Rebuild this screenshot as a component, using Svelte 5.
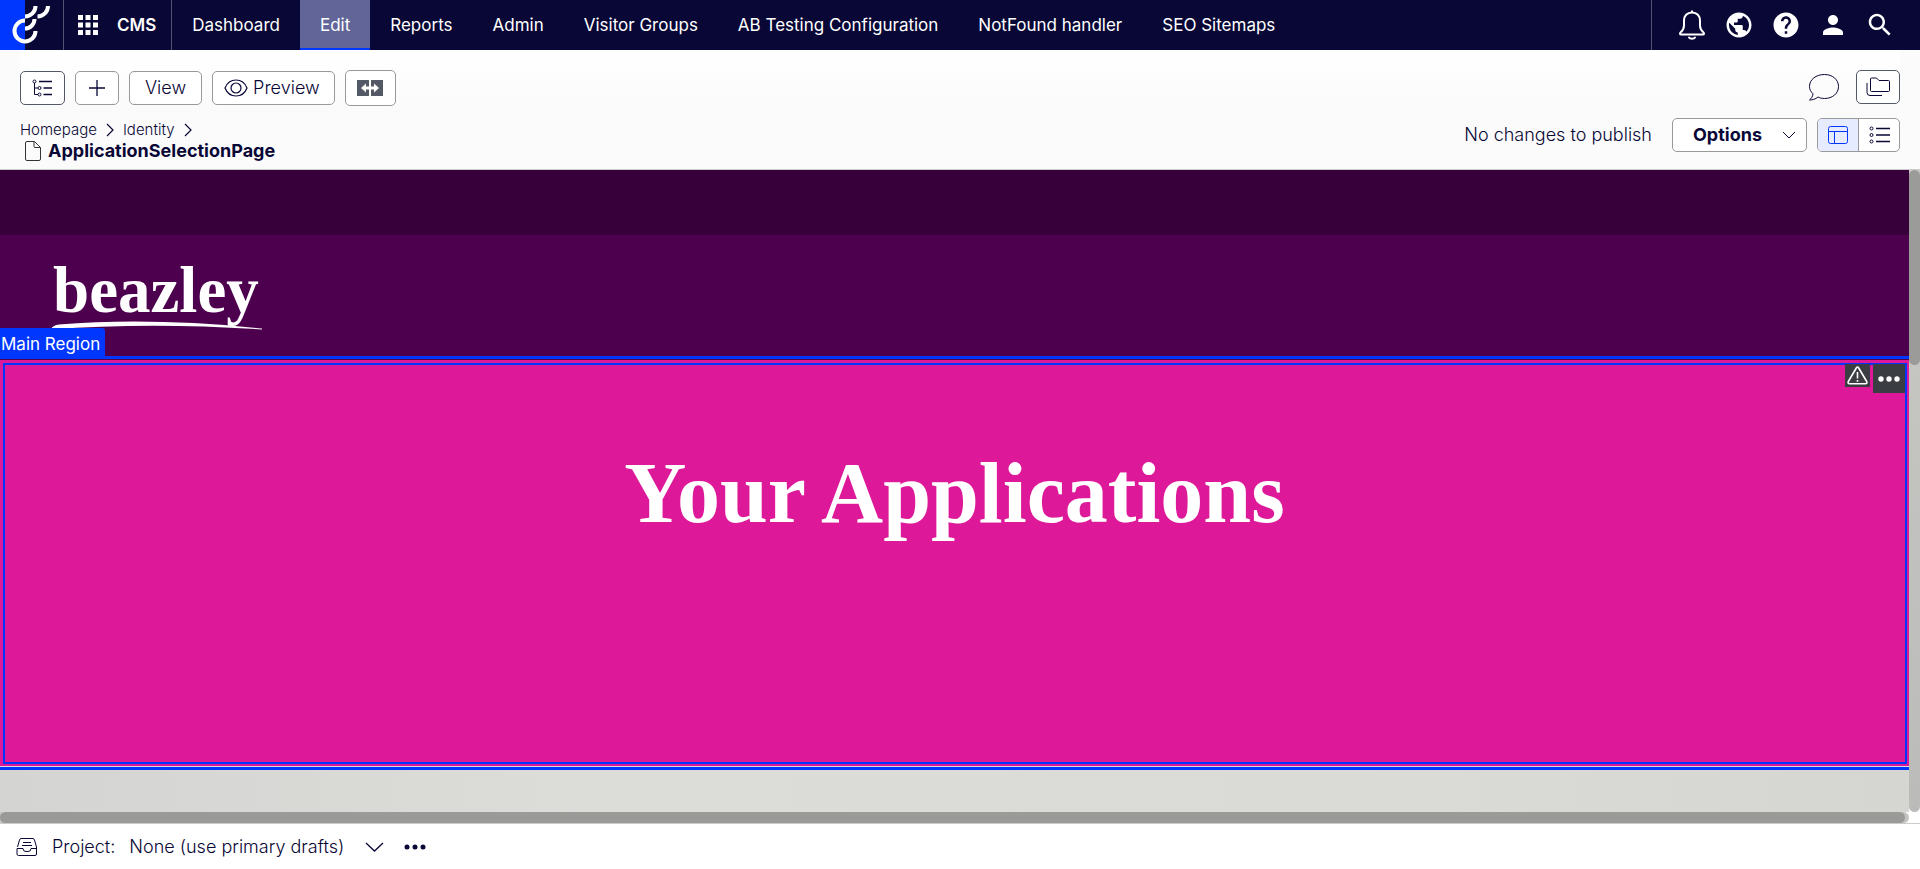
<script>
  const nav = ['Dashboard', 'Edit', 'Reports', 'Admin', 'Visitor Groups', 'AB Testing Configuration', 'NotFound handler', 'SEO Sitemaps'];
  const current = 'Edit';
</script>

<div class="app">
  <header class="top">
    <a class="logo" href="#home" aria-label="Home">
      <svg width="63" height="50" viewBox="0 0 63 50" fill="none" stroke="#fff" stroke-width="4">
        <path d="M0 0H25V50H0Z" fill="#0037ff" stroke="none" />
        <path d="M25 20.5A10.5 10.5 0 1 0 35.500 31" />
        <path d="M25 28.500A9.500 9.500 0 0 0 34.500 19" />
        <path d="M25 16.500A10.500 10.500 0 0 0 35.500 6" />
        <path d="M37.500 16.500A10.500 10.500 0 0 0 48 6" />
      </svg>
    </a>
    <button class="product">
      <svg width="20" height="20" viewBox="0 0 20 20" fill="#fff"><path d="M0 0h5v5H0zM7.500 0h5v5h-5zM15 0h5v5h-5zM0 7.500h5v5H0zM7.500 7.500h5v5h-5zM15 7.500h5v5h-5zM0 15h5v5H0zM7.500 15h5v5h-5zM15 15h5v5h-5z" /></svg>
      <span>CMS</span>
    </button>
    <nav>
      {#each nav as item}
        <a href="#{item}" class:active={item === current}>{item}</a>
      {/each}
    </nav>
    <div class="tools">
      <button aria-label="Notifications">
        <svg width="28" height="32" viewBox="0 0 28 32" fill="none" stroke="#fff" stroke-width="2" stroke-linejoin="round"><path d="M14 1.500v2M14 3.500c-5 0-8 3.500-8 8v5c0 3-.8 4.600-3.300 6.800-1.100 1-1 2.200.6 2.200h21.400c1.600 0 1.700-1.200.6-2.200C22.800 21.100 22 19.500 22 16.500v-5c0-4.500-3-8-8-8z" /><path d="M11 28.500c1 1.600 5 1.600 6 0" stroke-linecap="round" /></svg>
      </button>
      <button aria-label="Sites">
        <svg width="30" height="30" viewBox="0 0 24 24" fill="#fff"><path d="M12 2C6.480 2 2 6.480 2 12s4.480 10 10 10 10-4.480 10-10S17.520 2 12 2zm-1 17.930c-3.950-.49-7-3.850-7-7.930 0-.62.080-1.210.21-1.790L9 15v1c0 1.100.9 2 2 2v1.930zm6.900-2.540c-.26-.81-1-1.390-1.900-1.390h-1v-3c0-.55-.45-1-1-1H8v-2h2c.55 0 1-.45 1-1V7h2c1.100 0 2-.9 2-2v-.41c2.930 1.190 5 4.060 5 7.410 0 2.080-.8 3.970-2.100 5.390z" /></svg>
      </button>
      <button aria-label="Help">
        <svg width="30" height="30" viewBox="0 0 24 24" fill="#fff"><path d="M12 2C6.480 2 2 6.480 2 12s4.480 10 10 10 10-4.480 10-10S17.520 2 12 2zm1 17h-2v-2h2v2zm2.070-7.750l-.9.920C13.450 12.900 13 13.500 13 15h-2v-.5c0-1.100.45-2.100 1.170-2.830l1.240-1.260c.37-.36.59-.86.59-1.410 0-1.100-.9-2-2-2s-2 .9-2 2H8c0-2.210 1.790-4 4-4s4 1.790 4 4c0 .88-.36 1.680-.93 2.250z" /></svg>
      </button>
      <button aria-label="Account">
        <svg width="30" height="30" viewBox="0 0 24 24" fill="#fff"><path d="M12 12c2.210 0 4-1.790 4-4s-1.790-4-4-4-4 1.790-4 4 1.790 4 4 4zm0 2c-2.670 0-8 1.340-8 4v2h16v-2c0-2.660-5.330-4-8-4z" /></svg>
      </button>
      <button aria-label="Search">
        <svg width="30" height="30" viewBox="0 0 24 24" fill="#fff"><path d="M15.500 14h-.79l-.28-.27C15.410 12.590 16 11.110 16 9.500 16 5.910 13.090 3 9.500 3S3 5.910 3 9.500 5.910 16 9.500 16c1.610 0 3.090-.59 4.230-1.570l.27.28v.79l5 4.990L20.490 19l-4.990-5zm-6 0C7.010 14 5 11.990 5 9.500S7.010 5 9.500 5 14 7.010 14 9.500 11.990 14 9.500 14z" /></svg>
      </button>
    </div>
  </header>

  <section class="bar">
    <div class="row actions">
      <div class="group">
        <button class="btn dark tree" aria-label="Toggle navigation pane">
          <svg width="21" height="18" viewBox="0 0 21 18" fill="none" stroke="#080736"><circle cx="2.500" cy="2.500" r="1.500" /><circle cx="7.500" cy="9" r="1.500" /><circle cx="7.500" cy="15.500" r="1.500" /><path d="M2.500 4v11.500H6M2.500 9H6" /><path d="M7 2.500h13M11.500 9H20M11.500 15.500H20" stroke-width="1.300" /></svg>
        </button>
        <button class="btn plus" aria-label="Add">
          <svg width="18" height="18" viewBox="0 0 18 18" stroke="#080736" stroke-width="1.300"><path d="M9 1v16M1 9h16" /></svg>
        </button>
        <button class="btn view">View</button>
        <button class="btn preview">
          <svg width="24" height="18" viewBox="0 0 24 18" fill="none" stroke="#080736" stroke-width="1.200"><path d="M1 9C3 4 7 1 12 1s9 3 11 8c-2 5-6 8-11 8S3 14 1 9z" /><circle cx="12" cy="9" r="5" /></svg>
          Preview
        </button>
        <button class="btn compare" aria-label="Compare">
          <svg width="26" height="18" viewBox="0 0 26 18"><path d="M0 1h12v16H0zM14 1h12v16H14z" fill="#535a66" /><path d="M4 9l5-4.500v3h8v-3L22 9l-5 4.500v-3H9v3z" fill="#fff" /></svg>
        </button>
      </div>
      <div class="group right">
        <button class="plain" aria-label="Comments">
          <svg width="32" height="28" viewBox="0 0 32 28" fill="none" stroke="#080736" stroke-linejoin="round"><path d="M16.500 1.500c8 0 14 5 14 12s-6 12-14 12c-3 0-5-.8-6.500-1.500-2.500 2.300-6 3-8.500 3 1.500-1.200 3.300-3.500 3.500-6.200C2.800 18.800 1.500 16.500 1.500 13.500c0-7 6.500-12 15-12z" /></svg>
        </button>
        <button class="btn dark folder" aria-label="Toggle assets pane">
          <svg width="26" height="20" viewBox="0 0 26 20" fill="none" stroke="#080736" stroke-linejoin="round"><path d="M5.500 3V2Q5.500 1 6.500 1h5l2.500 2.500h9.500q1 0 1 1v9q0 1-1 1H6.500q-1 0-1-1z" /><path d="M2 6v9.500q0 3 3 3h12" /></svg>
        </button>
      </div>
    </div>
    <div class="row heading">
      <div class="where">
        <div class="crumbs">
          <a href="#homepage">Homepage</a>
          <svg width="8" height="14" viewBox="0 0 8 14" fill="none" stroke="#080736" stroke-width="1.200"><path d="M1 1l6 6-6 6" /></svg>
          <a href="#identity">Identity</a>
          <svg width="8" height="14" viewBox="0 0 8 14" fill="none" stroke="#080736" stroke-width="1.200"><path d="M1 1l6 6-6 6" /></svg>
        </div>
        <h1>
          <svg width="16" height="20" viewBox="0 0 16 20" fill="none" stroke="#333" stroke-linejoin="round"><path d="M9.500.5H2Q.5.500.5 2v16q0 1.500 1.500 1.500h12q1.500 0 1.500-1.500V6.500zM9 .5v5q0 1 1 1h5.500" /></svg>
          <span>ApplicationSelectionPage</span>
        </h1>
      </div>
      <div class="publish">
        <span>No changes to publish</span>
        <button class="btn options">
          <span>Options</span>
          <svg width="14" height="8" viewBox="0 0 14 8" fill="none" stroke="#080736"><path d="M1 1l6 6 6-6" /></svg>
        </button>
        <div class="toggle">
          <button class="on" aria-label="On-page editing">
            <svg width="20" height="18" viewBox="0 0 20 18" fill="none" stroke="#0037ff"><rect x=".5" y=".5" width="19" height="17" rx="2" /><path d="M.5 5.500h19M6.500 5.500v12" /></svg>
          </button>
          <button aria-label="All properties">
            <svg width="21" height="18" viewBox="0 0 21 18" fill="none" stroke="#080736"><circle cx="2.500" cy="2.500" r="1.500" /><circle cx="2.500" cy="9" r="1.500" /><circle cx="2.500" cy="15.500" r="1.500" /><path d="M7 2.500h14M7 9h14M7 15.500h14" stroke-width="1.300" /></svg>
          </button>
        </div>
      </div>
    </div>
  </section>

  <main>
    <div class="page">
      <div class="strip"></div>
      <div class="brand">
        <div class="mark">
          <span>beazley</span>
          <svg width="212" height="10" viewBox="0 0 212 10" fill="#fff"><path d="M0 8Q2 4 8 3.500Q100-4 211 7.500V8.500Q100 1 0 8.500z" /></svg>
        </div>
      </div>
      <div class="region">
        <span class="label">Main Region</span>
        <div class="block">
          <h2>Your Applications</h2>
          <div class="badges">
            <button class="warn" aria-label="Warning">
              <svg width="21" height="19" viewBox="0 0 21 19" fill="none" stroke="#fff" stroke-width="1.600" stroke-linejoin="round"><path d="M10.500 1Q9.800 1 9.300 2L1.300 15.500Q.5 17.700 2.500 17.700h16q2 0 1.200-2.200L11.700 2Q11.200 1 10.500 1zM10.500 6v6.500M10.500 14v1.800" /></svg>
            </button>
            <button class="more" aria-label="Block options">
              <svg width="22" height="6" viewBox="0 0 22 6" fill="#fff"><circle cx="3" cy="3" r="2.700" /><circle cx="11" cy="3" r="2.700" /><circle cx="19" cy="3" r="2.700" /></svg>
            </button>
          </div>
        </div>
      </div>
      <div class="texture"></div>
    </div>
    <div class="vscroll"><div class="thumb"></div></div>
    <div class="hscroll"><div class="thumb"></div></div>
  </main>

  <footer>
    <svg width="22" height="18" viewBox="0 0 22 18" fill="none" stroke="#080736" stroke-linejoin="round"><path d="M1.500 9L3.500 2Q4 .5 5 .5h12q1 0 1.500 1.500l2 7v7q0 1.500-1.500 1.500H2.500Q1 17.500 1 16V10.500h6q0 3 3 3h2q3 0 3-3h6M7 4.500h8M6 7.500h10" /></svg>
    <span class="project">Project:</span>
    <button class="choice">
      <span>None (use primary drafts)</span>
      <svg width="19" height="10" viewBox="0 0 19 10" fill="none" stroke="#080736" stroke-width="1.300"><path d="M1 1l8.500 8L18 1" /></svg>
    </button>
    <button class="dots" aria-label="Project options">
      <svg width="22" height="6" viewBox="0 0 22 6" fill="#080736"><circle cx="3" cy="3" r="2.500" /><circle cx="11" cy="3" r="2.500" /><circle cx="19" cy="3" r="2.500" /></svg>
    </button>
  </footer>
</div>

<style>
  :global(body) { margin: 0; }
  * { box-sizing: border-box; }
  .app {
    min-height: 100vh;
    display: flex;
    flex-direction: column;
    font-family: Inter, "Liberation Sans", sans-serif;
    font-size: 18px;
    line-height: 22px;
    font-weight: 300;
    color: #080736;
    background: #fff;
  }
  button { font: inherit; color: inherit; background: none; border: 0; padding: 0; margin: 0; cursor: pointer; }
  a { color: inherit; text-decoration: none; }
  svg { display: block; flex: none; }

  .top { display: flex; height: 50px; background: #080736; color: #fff; font-size: 17px; font-weight: 400; }
  .logo { border-right: 1px solid #53526f; }
  .product { display: flex; align-items: center; gap: 19px; padding: 0 15px 0 14px; font-weight: 600; border-right: 1px solid #53526f; }
  nav { display: flex; flex: 1; }
  nav a { display: flex; align-items: center; padding: 0 20px; white-space: nowrap; }
  nav a.active { background: #616598; box-shadow: inset 0 -2px #0037ff; }
  .tools { display: flex; align-items: center; gap: 17px; padding: 0 25px; border-left: 1px solid #53526f; }
  .tools button { width: 30px; display: flex; justify-content: center; }

  .bar { padding: 0 20px; background: #fbfbfb; border-bottom: 1px solid #ccc; }
  .row { display: flex; justify-content: space-between; }
  .actions { height: 66px; padding-top: 20px; background: linear-gradient(#fff, #fafafa); }
  .group { display: flex; align-items: center; gap: 10px; height: 36px; }
  .right { gap: 16px; height: 34px; }
  .btn { display: flex; align-items: center; justify-content: center; height: 34px; border: 1px solid #999; border-radius: 5px; background: #fff; }
  .btn.dark { border-color: #535a66; }
  .tree { width: 45px; }
  .plus, .folder { width: 44px; }
  .view { padding: 0 15px; }
  .preview { gap: 5px; padding: 0 14px 0 11px; }
  .btn.compare { width: 51px; height: 36px; }
  .heading { height: 53px; }
  .where { padding-top: 4px; }
  .crumbs { display: flex; align-items: center; gap: 9px; font-size: 15px; line-height: 20px; }
  h1 { display: flex; align-items: center; gap: 7px; margin: 0 0 0 5px; font-size: 18px; line-height: 22px; font-weight: 700; }
  .publish { display: flex; align-items: flex-start; gap: 10px; padding-top: 2px; line-height: 34px; }
  .options { gap: 20px; padding: 0 10px 0 20px; margin-left: 10px; font-weight: 700; }
  .toggle { display: flex; height: 34px; border: 1px solid #999; border-radius: 5px; background: #fff; overflow: hidden; }
  .toggle button { width: 40px; display: flex; align-items: center; justify-content: center; }
  .toggle .on { width: 41px; background: #e6ebff; border-right: 1px solid #999; }

  main { flex: 1; display: grid; grid-template-columns: 1fr 11px; grid-template-rows: 1fr 11px; border-bottom: 1px solid #ccc; }
  .page { display: flex; flex-direction: column; background: #d9dad6; min-width: 0; overflow: hidden; }
  .strip { height: 65px; background: #38003a; }
  .brand { height: 121px; padding: 24px 51px 0; background: #4c004e; color: #fff; }
  .mark { width: 212px; font-family: "Liberation Serif", serif; font-size: 65px; line-height: 62px; font-weight: 700; }
  .mark span { display: block; margin-left: 2px; }
  .region { position: relative; padding: 1px 0; border-top: 3px solid #0037ff; border-bottom: 3px solid #0037ff; }
  .label { position: absolute; left: 0; bottom: 100%; padding: 5px 5px 4px 1px; background: #0037ff; color: #fff; font-size: 17px; font-weight: 400; border-radius: 0 3px 0 0; }
  .block { position: relative; height: 406px; padding: 85px 20px; background: #dd1899; box-shadow: 0 -1px #4c004e; }
  .block::after { content: ""; position: absolute; inset: 3px 2px 2px 3px; border: 2px solid #0037ff; pointer-events: none; }
  h2 { margin: 0; text-align: center; color: #fff; font-family: "Liberation Serif", serif; font-size: 86px; line-height: 96px; font-weight: 700; }
  .badges { position: absolute; z-index: 1; top: 4px; right: 4px; display: flex; align-items: flex-start; gap: 3px; }
  .badges button { display: flex; align-items: center; justify-content: center; background: #3a3d42; }
  .warn { width: 25px; height: 23px; }
  .more { width: 32px; height: 29px; }
  .texture { flex: 1; background: linear-gradient(90deg, #d4d5d2, #dcddd9 30%, #dadbd7 75%, #d5d6d2); }
  .vscroll { background: linear-gradient(#c9cac6, #bbbcb9); border-radius: 0 0 6px 6px; }
  .vscroll .thumb { height: 195px; background: #9b9c99; border-radius: 6px; }
  .hscroll { padding-right: 4px; background: #c4c5c2; border-radius: 0 6px 6px 0; }
  .hscroll .thumb { height: 11px; background: #9a9b98; border-radius: 6px; }

  footer { display: flex; align-items: center; height: 45px; padding: 0 16px; }
  .project { margin: 0 14px; }
  .choice { display: flex; align-items: center; gap: 21px; }
  .dots { margin-left: 20px; }
</style>
